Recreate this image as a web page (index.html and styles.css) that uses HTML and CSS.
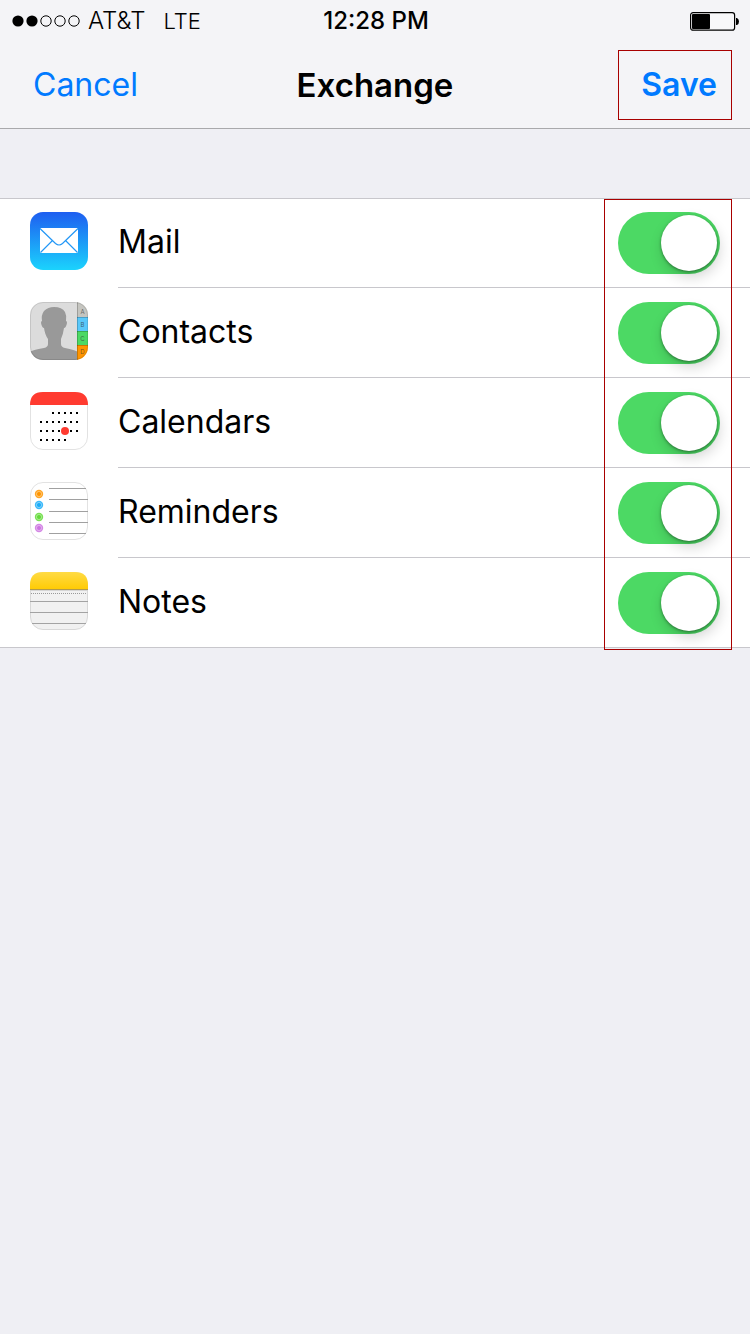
FILE: index.html
```html
<!DOCTYPE html>
<html lang="en">
<head>
    <meta charset="UTF-8">
    <meta name="viewport" content="width=device-width, initial-scale=1.0">
    <title>Exchange</title>
    <link rel="stylesheet" href="styles.css">
</head>
<body>
    <header class="header">
        <div class="status-bar">
            <div class="carrier">
                <svg class="signal" width="70" height="12" viewBox="0 0 70 12">
                    <circle cx="6" cy="6" r="5.6"/>
                    <circle cx="20" cy="6" r="5.6"/>
                    <g fill="none" stroke="#000">
                        <circle cx="34" cy="6" r="5.2"/>
                        <circle cx="48" cy="6" r="5.2"/>
                        <circle cx="62" cy="6" r="5.2"/>
                    </g>
                </svg>
                <span>AT&amp;T</span>
                <span class="network">LTE</span>
            </div>
            <div class="time">12:28 PM</div>
            <svg class="battery" width="50" height="20" viewBox="0 0 50 20">
                <rect x="0.6" y="1.6" width="44" height="17.6" rx="2.5" fill="#fff" fill-opacity="0.4" stroke="#000" stroke-width="1.2"/>
                <rect x="2" y="3" width="18" height="15" rx="1"/>
                <path d="M46 7h1q2 1 2 3.500t-2 3.500h-1z"/>
            </svg>
        </div>
        <nav class="nav-bar">
            <button class="nav-button cancel" type="button">Cancel</button>
            <h1>Exchange</h1>
            <button class="nav-button save" type="submit" form="accountForm">Save</button>
        </nav>
    </header>
    <form id="accountForm" class="settings">
        <div class="row">
            <svg class="icon" width="58" height="58" viewBox="0 0 58 58">
                <defs>
                    <linearGradient id="mailFill" x1="0" y1="0" x2="0" y2="1">
                        <stop offset="0" stop-color="#1e5ef0"/>
                        <stop offset="1" stop-color="#1bd3fd"/>
                    </linearGradient>
                </defs>
                <rect width="58" height="58" rx="13" fill="url(#mailFill)"/>
                <rect x="10" y="16" width="38" height="25" rx="1" fill="#fff"/>
                <g fill="none" stroke="#2397f6" stroke-width="1.2">
                    <path d="M10 16.500l15.500 15q3.500 3 7 0l15.500-15"/>
                    <path d="M10.500 40.500l12-12M47.500 40.500l-12-12"/>
                </g>
            </svg>
            <div class="row-content">
                <label for="mail">Mail</label>
                <input class="toggle" type="checkbox" id="mail" checked>
            </div>
        </div>
        <div class="row">
            <svg class="icon" width="58" height="58" viewBox="0 0 58 58">
                <defs>
                    <clipPath id="iconShape"><rect width="58" height="58" rx="13"/></clipPath>
                </defs>
                <g clip-path="url(#iconShape)">
                    <rect width="58" height="58" fill="#dcdcdc"/>
                    <path fill="#999" d="M0 50q2-2 14-4 4-1 4-4v-5q-3-4-4-11-2 0-3-5 0-2 1-2-1-6 2-10 4-4 10-4 8 0 11 5 2 4 1 9 1 0 1 2-1 5-3 5-1 7-3 11v5q0 3 4 4 10 2 13 4v8H0z"/>
                    <rect x="47" width="11" height="15" fill="#c5c5c0"/>
                    <rect x="47" y="15" width="11" height="14" fill="#5ac8fa"/>
                    <rect x="47" y="29" width="11" height="14" fill="#4cd964"/>
                    <rect x="47" y="43" width="11" height="15" fill="#ff9500"/>
                    <path d="M47.500 0v58M47 15.500h11M47 29.500h11M47 43.500h11" stroke="#000" stroke-opacity="0.200"/>
                    <g class="tabs">
                        <text x="52.500" y="11.500">A</text>
                        <text x="52.500" y="24.500">B</text>
                        <text x="52.500" y="38.500">C</text>
                        <text x="52.500" y="51.500">D</text>
                    </g>
                </g>
                <rect x="0.500" y="0.500" width="57" height="57" rx="12.500" fill="none" stroke="#000" stroke-opacity="0.100"/>
            </svg>
            <div class="row-content">
                <label for="contacts">Contacts</label>
                <input class="toggle" type="checkbox" id="contacts" checked>
            </div>
        </div>
        <div class="row">
            <svg class="icon" width="58" height="58" viewBox="0 0 58 58">
                <rect x="0.500" y="0.500" width="57" height="57" rx="12.500" fill="#fff" stroke="#e2e2e2"/>
                <path d="M0 13q0-13 13-13h32q13 0 13 13z" fill="#ff3b30"/>
                <!-- days of the month -->
                <g stroke="#000" stroke-width="2" stroke-dasharray="2 4">
                    <path d="M22 21h26"/>
                    <path d="M10 30h38"/>
                    <path d="M10 39h38"/>
                    <path d="M10 48h26"/>
                </g>
                <circle cx="35" cy="39" r="4" fill="#ff3b30"/>
            </svg>
            <div class="row-content">
                <label for="calendars">Calendars</label>
                <input class="toggle" type="checkbox" id="calendars" checked>
            </div>
        </div>
        <div class="row">
            <svg class="icon" width="58" height="58" viewBox="0 0 58 58">
                <rect x="0.500" y="0.500" width="57" height="57" rx="12.500" fill="#fff" stroke="#e2e2e2"/>
                <path d="M19 6.500h37M19 17.500h39M19 29.500h39M19 40.500h39M19 51.500h37" stroke="#a0a0a0"/>
                <g fill="#ff9500"><circle cx="9" cy="12" r="4.200" fill-opacity="0.850"/><circle cx="9" cy="12" r="2"/></g>
                <g fill="#1badf8"><circle cx="9" cy="23" r="4.200" fill-opacity="0.850"/><circle cx="9" cy="23" r="2"/></g>
                <g fill="#63da38"><circle cx="9" cy="35" r="4.200" fill-opacity="0.850"/><circle cx="9" cy="35" r="2"/></g>
                <g fill="#cc73e1"><circle cx="9" cy="46" r="4.200" fill-opacity="0.850"/><circle cx="9" cy="46" r="2"/></g>
                <g fill="none" stroke="#fff" stroke-opacity="0.400" stroke-width="0.800">
                    <circle cx="9" cy="12" r="2.600"/>
                    <circle cx="9" cy="23" r="2.600"/>
                    <circle cx="9" cy="35" r="2.600"/>
                    <circle cx="9" cy="46" r="2.600"/>
                </g>
            </svg>
            <div class="row-content">
                <label for="reminders">Reminders</label>
                <input class="toggle" type="checkbox" id="reminders" checked>
            </div>
        </div>
        <div class="row last">
            <svg class="icon" width="58" height="58" viewBox="0 0 58 58">
                <defs>
                    <linearGradient id="notesFill" x1="0" y1="0" x2="0" y2="1">
                        <stop offset="0" stop-color="#ffdb45"/>
                        <stop offset="1" stop-color="#ffcb05"/>
                    </linearGradient>
                </defs>
                <rect x="0.500" y="0.500" width="57" height="57" rx="12.500" fill="#f1f1f1" stroke="#d8d8d8"/>
                <path d="M0 17v-4q0-13 13-13h32q13 0 13 13v4z" fill="url(#notesFill)"/>
                <path d="M0 17.500h58" stroke="#b39a4a"/>
                <path d="M0 18.500h58" stroke="#d5d5d5"/>
                <path d="M1 21.500h56" stroke="#999" stroke-dasharray="1 1"/>
                <path d="M0 29.500h58M0 40.500h58M2 51.500h54" stroke="#a3a3a3"/>
            </svg>
            <div class="row-content">
                <label for="notes">Notes</label>
                <input class="toggle" type="checkbox" id="notes" checked>
            </div>
        </div>
        <div class="highlight"></div>
    </form>
</body>
</html>
```
FILE: styles.css
```css
* { box-sizing: border-box; }
body { min-height: 100vh; margin: 0; background: #efeff4; color: #000; font-family: Inter, "Liberation Sans", sans-serif; }

.header { background: #f4f4f7; border-bottom: 1px solid #a9a9ac; }
.status-bar { display: grid; grid-template-columns: 1fr auto 1fr; align-items: center; height: 41px; padding: 0 10px 0 12px; font-size: 24px; }
.carrier { display: flex; align-items: center; gap: 6px; font-weight: 300; }
.network { margin-left: 12px; font-size: 22px; }
.time { font-weight: 500; }
.battery { justify-self: end; }

.nav-bar { display: grid; grid-template-columns: 1fr auto 1fr; align-items: center; height: 87px; padding: 0 18px; }
.nav-bar h1 { margin: 0; font-size: 33px; font-weight: 600; }
.nav-button { height: 70px; padding: 0 14px; border: 1px solid transparent; background: none; color: #007aff; font-family: inherit; font-size: 32px; cursor: pointer; }
.cancel { justify-self: start; }
.save { justify-self: end; padding-left: 22px; border-color: #a80000; font-weight: 600; }

.settings { position: relative; margin-top: 69px; background: #fff; }
.row { display: flex; height: 90px; padding-left: 30px; }
.row:first-child { box-shadow: inset 0 1px #c8c7cc; }
.icon { flex: none; margin: 14px 30px 0 0; }
.row-content { display: flex; flex: 1; align-items: center; justify-content: space-between; padding-right: 30px; border-bottom: 1px solid #c8c7cc; }
.row-content label { padding-bottom: 2px; font-size: 32px; }
.last { border-bottom: 1px solid #c8c7cc; }
.last .row-content { border-bottom: 0; }
.tabs { fill: #333; fill-opacity: 0.7; font-size: 6px; text-anchor: middle; }

.toggle { appearance: none; width: 102px; height: 62px; margin: 0; padding: 3px; border-radius: 31px; background: #e5e5ea; cursor: pointer; }
.toggle::before { content: ""; display: block; width: 56px; height: 56px; border-radius: 50%; background: #fff; box-shadow: 0 1px 3px rgba(0, 0, 0, 0.4), 2px 6px 14px rgba(0, 0, 0, 0.18); }
.toggle:checked { background: #4cd964; }
.toggle:checked::before { margin-left: auto; }

.highlight { position: absolute; top: 1px; right: 18px; bottom: -2px; width: 128px; border: 1px solid #a80000; pointer-events: none; }
```
